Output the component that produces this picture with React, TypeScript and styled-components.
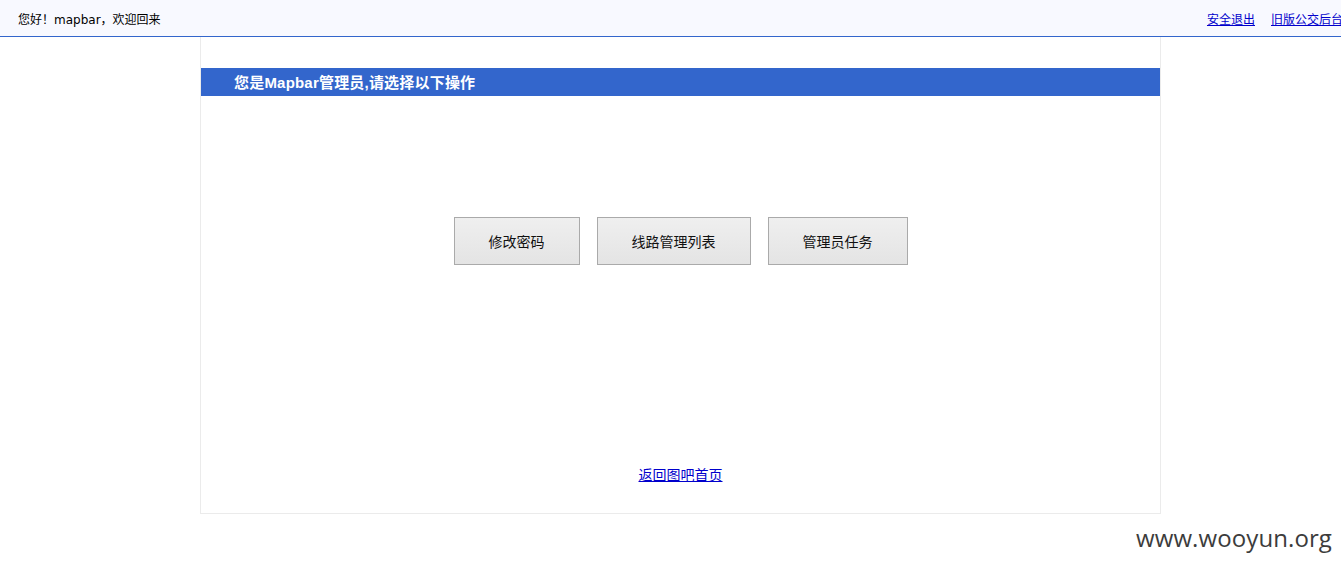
import React from 'react';
import styled, { createGlobalStyle } from 'styled-components';

const GlobalStyle = createGlobalStyle`
  html, body {
    margin: 0;
    padding: 0;
    background: #fff;
    font-family: "Liberation Sans", "Noto Sans CJK SC", sans-serif;
    font-size: 12px;
    color: #000;
    overflow: hidden;
  }
`;

const Page = styled.div`
  position: relative;
  width: 1341px;
  height: 567px;
`;

const TopBar = styled.div`
  height: 36px;
  background: #f8f9ff;
  border-bottom: 1px solid #3366cc;
  display: flex;
  align-items: center;
  justify-content: space-between;
  padding: 0 0 0 18px;
  overflow: hidden;
  white-space: nowrap;
`;

const Greeting = styled.span`
  font-family: "DejaVu Sans", "Noto Sans CJK SC", sans-serif;
  font-size: 12px;
  margin-top: 1px;
`;

const TopLinks = styled.div`
  display: flex;
  gap: 16px;
  margin-right: -2px;
`;

const TopLink = styled.a`
  color: #0000cc;
  text-decoration: underline;
  font-size: 12px;
`;

const Panel = styled.div`
  width: 959px;
  height: 476px;
  margin-left: 200px;
  border: 1px solid #ebebeb;
  border-top: none;
  display: flex;
  flex-direction: column;
  align-items: stretch;
`;

const PanelTitle = styled.div`
  margin-top: 31px;
  height: 28px;
  background: #3366cc;
  color: #fff;
  font-weight: bold;
  font-size: 15px;
  letter-spacing: 0.2px;
  line-height: 29px;
  padding-left: 33px;
`;

const Actions = styled.div`
  margin-top: 121px;
  display: flex;
  justify-content: center;
  gap: 17px;
`;

const ActionButton = styled.button<{ $w: number }>`
  width: ${p => p.$w}px;
  height: 48px;
  border: 1px solid #aaa;
  background: linear-gradient(#efefef, #e4e4e4);
  font-family: "Noto Sans CJK SC", sans-serif;
  font-size: 14px;
  color: #111;
  padding: 0;
  cursor: pointer;
`;

const Footer = styled.div`
  margin-top: 199px;
  text-align: center;
`;

const HomeLink = styled.a`
  color: #0000cc;
  text-decoration: underline;
  font-size: 14px;
`;

const Watermark = styled.div`
  position: absolute;
  right: 9px;
  top: 521px;
  font-family: "Open Sans", sans-serif;
  font-size: 24px;
  color: #3c3c3c;
  letter-spacing: 0.1px;
`;

export default function App() {
  return (
    <Page>
      <GlobalStyle />
      <TopBar>
        <Greeting>您好！mapbar，欢迎回来</Greeting>
        <TopLinks>
          <TopLink href="#">安全退出</TopLink>
          <TopLink href="#">旧版公交后台</TopLink>
        </TopLinks>
      </TopBar>
      <Panel>
        <PanelTitle>您是Mapbar管理员,请选择以下操作</PanelTitle>
        <Actions>
          <ActionButton $w={126}>修改密码</ActionButton>
          <ActionButton $w={154}>线路管理列表</ActionButton>
          <ActionButton $w={140}>管理员任务</ActionButton>
        </Actions>
        <Footer>
          <HomeLink href="#">返回图吧首页</HomeLink>
        </Footer>
      </Panel>
      <Watermark>www.wooyun.org</Watermark>
    </Page>
  );
}
